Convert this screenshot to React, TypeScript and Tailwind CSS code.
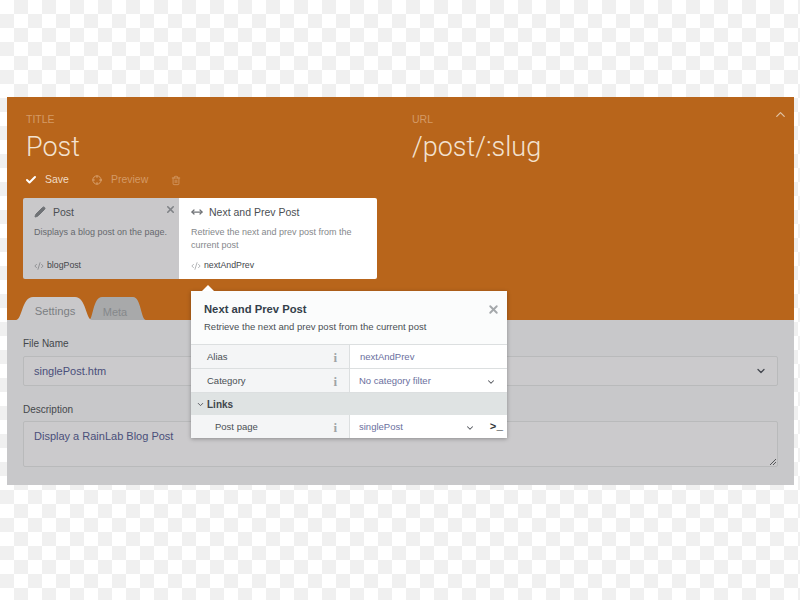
import { ChevronDown, ChevronUp, Pencil, Trash2, X, Check, Crosshair, MoveHorizontal, CodeXml } from 'lucide-react';

const font = "font-['Liberation_Sans',Arial,sans-serif]";

function PropRow({ label, indent, last, children }: { label: string; indent?: boolean; last?: boolean; children: React.ReactNode }) {
  return (
    <div className={`flex bg-white ${last ? 'h-[23px]' : 'h-[24px] border-b border-[#dcdfe0]'}`}>
      <div className={`flex w-[159px] items-center justify-between border-r border-[#dcdfe0] bg-[#f4f5f6] pt-[2px] pr-[12px] text-[9.5px] text-[#4a4f54] ${indent ? 'pl-[24px]' : 'pl-[16px]'}`}>
        <span>{label}</span>
        <span className="font-['Liberation_Serif',serif] text-[13px] leading-none font-bold text-[#a0a4a7]">i</span>
      </div>
      <div className="flex flex-1 items-center pt-[2px] text-[9.5px] text-[#6b6f9e]">{children}</div>
    </div>
  );
}

export default function App() {
  return (
    <div className={`h-[600px] w-[800px] overflow-hidden bg-white bg-[repeating-conic-gradient(#f0f0f0_0_25%,#ffffff_0_50%)] bg-[length:28px_28px] pt-[97px] pl-[7px] ${font}`}>
      <div className="relative h-[388px] w-[787px] bg-[#c8c8ca]">
        {/* 上のオレンジ部分 */}
        <div className="relative h-[223px] bg-[#b8651b] pt-[16px]">
          <ChevronUp className="absolute top-[10px] right-[6px] h-[15px] w-[15px] text-[#e0c3a5]" strokeWidth={2} />
          <div className="flex pl-[19px]">
            <div className="w-[386px]">
              <div className="text-[10.5px] leading-[13px] text-[#d49a66]">TITLE</div>
              <div className="mt-[4px] font-['Roboto',sans-serif] text-[27px] leading-[34px] font-light text-[#f3e2d0]">Post</div>
            </div>
            <div>
              <div className="text-[10.5px] leading-[13px] text-[#d49a66]">URL</div>
              <div className="mt-[4px] font-['Roboto',sans-serif] text-[27px] leading-[34px] font-light text-[#f3e2d0]">/post/:slug</div>
            </div>
          </div>
          <div className="mt-[7px] flex h-[18px] items-center pl-[18px] text-[10.5px]">
            <Check className="h-[12px] w-[12px] text-white" strokeWidth={4} />
            <span className="ml-[8px] text-[#f0dcc6]">Save</span>
            <Crosshair className="ml-[23px] h-[10px] w-[10px] text-[#dca878]" />
            <span className="ml-[9px] text-[#d49a66]">Preview</span>
            <Trash2 className="ml-[23px] h-[11px] w-[10px] text-[#d49a66]" />
          </div>
          {/* コンポーネントカード */}
          <div className="mt-[9px] ml-[16px] flex h-[81px] w-[354px] overflow-hidden rounded-[2px]">
            <div className="relative flex w-[156px] flex-col bg-[#c9c8ca] pt-[7px] pl-[11px]">
              <X className="absolute top-[6px] right-[3px] h-[11px] w-[11px] text-[#7f8286]" strokeWidth={3.5} />
              <div className="flex items-center text-[10.5px] leading-[14px] text-[#4b4f54]">
                <Pencil className="h-[12px] w-[12px] fill-[#6f7276] text-[#6f7276]" />
                <span className="ml-[7px]">Post</span>
              </div>
              <div className="mt-[7px] text-[9px] leading-[13px] text-[#66696e]">Displays a blog post on the page.</div>
              <div className="mt-auto mb-[7px] flex items-center text-[8.75px] leading-[13px] text-[#44474b]">
                <CodeXml className="mr-[3px] h-[10px] w-[10px] text-[#85878a]" />
                blogPost
              </div>
            </div>
            <div className="flex flex-1 flex-col bg-white pt-[7px] pl-[12px]">
              <div className="flex items-center text-[10.5px] leading-[14px] text-[#4b4f54]">
                <MoveHorizontal className="h-[12px] w-[12px] text-[#6f7276]" strokeWidth={2.5} />
                <span className="ml-[6px]">Next and Prev Post</span>
              </div>
              <div className="mt-[7px] w-[170px] text-[9px] leading-[13px] text-[#85888c]">Retrieve the next and prev post from the current post</div>
              <div className="mt-auto mb-[7px] flex items-center text-[8.75px] leading-[13px] text-[#44474b]">
                <CodeXml className="mr-[3px] h-[10px] w-[10px] text-[#a5a7aa]" />
                nextAndPrev
              </div>
            </div>
          </div>
          {/* タブ */}
          <div className="absolute bottom-0 left-[9px] flex items-end">
            <div className="z-10 flex h-[23px] w-[76px] items-end justify-center bg-[#c9c8ca] pl-[2px] text-[11.25px] text-[#7c7f83] [clip-path:path('M0_23C6_23_6_0_17_0H59C70_0_70_23_76_23Z')]">Settings</div>
            <div className="-ml-[3px] flex h-[23px] w-[57px] items-end justify-center bg-[#a8a9aa] pr-[5px] text-[11px] text-[#85888a] [clip-path:path('M0_23C4_23_4_0_13_0H44C52_0_52_23_57_23Z')]">Meta</div>
          </div>
        </div>

        {/* フォーム */}
        <div className="px-[16px] pt-[17px]">
          <div className="text-[10px] leading-[14px] text-[#44474a]">File Name</div>
          <div className="mt-[5px] flex h-[30px] items-center justify-between rounded-[2px] border border-[#b9babb] bg-[#cbcacc] px-[10px] text-[11px] text-[#4a4f7a]">
            singlePost.htm
            <ChevronDown className="h-[12px] w-[12px] text-[#44474f]" strokeWidth={2.5} />
          </div>
          <div className="mt-[17px] text-[10px] leading-[14px] text-[#44474a]">Description</div>
          <div className="relative mt-[4px] h-[46px] rounded-[2px] border border-[#b9babb] bg-[#cbcacc] pt-[7px] pl-[10px] text-[11px] leading-[14px] text-[#4a4f7a]">
            Display a RainLab Blog Post
            <svg className="absolute right-[1px] bottom-[1px] h-[7px] w-[7px] text-[#55575a]" viewBox="0 0 7 7" fill="none" stroke="currentColor">
              <path d="M1 7 7 1M4 7l3-3" />
            </svg>
          </div>
        </div>

        {/* ポップオーバー */}
        <div className="absolute top-[194px] left-[184px] w-[316px] bg-white shadow-[0_1px_4px_rgba(0,0,0,0.3)]">
          <div className="absolute -top-[6px] left-[11px] h-0 w-0 border-x-[6px] border-b-[6px] border-x-transparent border-b-white" />
          <div className="relative h-[54px] border-b border-[#dcdfe0] bg-[#fbfcfc] pt-[11px] pl-[13px]">
            <X className="absolute top-[12px] right-[7px] h-[13px] w-[13px] text-[#a4a8ab]" strokeWidth={3.5} />
            <div className="text-[11.25px] leading-[14px] font-bold text-[#34404a]">Next and Prev Post</div>
            <div className="mt-[4px] text-[9.5px] leading-[13px] text-[#4a4f54]">Retrieve the next and prev post from the current post</div>
          </div>
          <PropRow label="Alias">
            <span className="pl-[10px]">nextAndPrev</span>
          </PropRow>
          <PropRow label="Category">
            <div className="flex flex-1 items-center justify-between pr-[11px] pl-[9px]">
              No category filter
              <ChevronDown className="h-[10px] w-[10px] text-[#55585e]" strokeWidth={2.5} />
            </div>
          </PropRow>
          <div className="flex h-[22px] items-center bg-[#dfe3e3] pl-[5px] text-[10px] font-bold text-[#3f464c]">
            <ChevronDown className="mr-[2px] h-[9px] w-[9px] text-[#55585e]" strokeWidth={2.5} />
            Links
          </div>
          <PropRow label="Post page" indent last>
            <div className="flex flex-1 items-center pl-[9px]">
              singlePost
              <ChevronDown className="mr-[15px] ml-auto h-[10px] w-[10px] text-[#55585e]" strokeWidth={2.5} />
              <span className="mr-[4px] font-['Liberation_Mono',monospace] text-[11px] font-bold text-[#33373b]">&gt;_</span>
            </div>
          </PropRow>
        </div>
      </div>
    </div>
  );
}
